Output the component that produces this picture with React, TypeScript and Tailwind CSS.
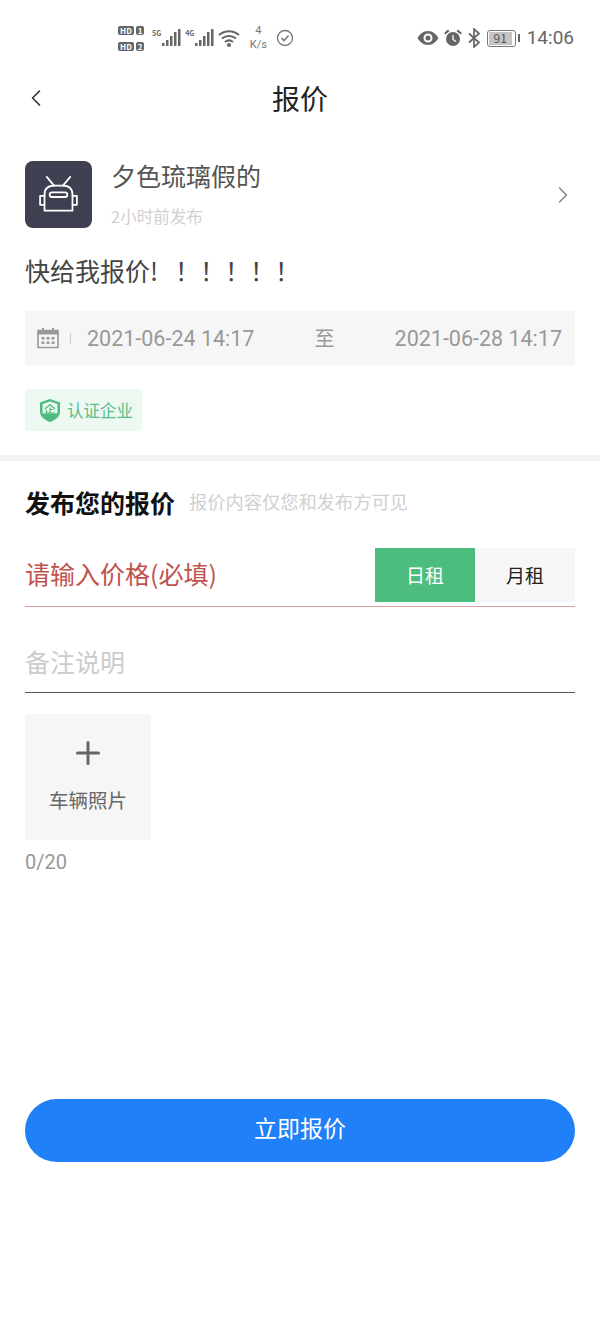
import { ChevronLeft, ChevronRight, Plus } from "lucide-react";

const Bars = () => (
  <svg width="20" height="20" viewBox="0 0 20 20" fill="#666">
    <rect x="1" y="15" width="2.500" height="3" />
    <rect x="5" y="12" width="2.500" height="6" />
    <rect x="9" y="8" width="2.500" height="10" />
    <rect x="13" y="4" width="2.500" height="14" />
    <rect x="17" y="1" width="2.500" height="17" />
  </svg>
);

const StatusBar = () => (
  <div className="h-[75px] flex items-start pt-[21px] pl-[118px] pr-[26px] justify-between">
    <div className="flex items-center h-[34px]">
      <div className="flex flex-col gap-[7px] text-[8px] leading-[9px] font-bold text-white">
        <div className="flex gap-[2px]">
          <span className="bg-[#666] rounded-[2px] px-[1px] w-[16px] text-center">HD</span>
          <span className="bg-[#666] rounded-[2px] w-[8px] text-center">1</span>
        </div>
        <div className="flex gap-[2px]">
          <span className="bg-[#666] rounded-[2px] px-[1px] w-[16px] text-center">HD</span>
          <span className="bg-[#666] rounded-[2px] w-[8px] text-center">2</span>
        </div>
      </div>
      <span className="ml-[8px] mb-[10px] text-[7px] font-bold text-[#666]">5G</span>
      <Bars />
      <span className="ml-[4px] mb-[10px] text-[7px] font-bold text-[#666]">4G</span>
      <Bars />
      <svg className="ml-[3px]" width="24" height="20" viewBox="0 0 24 20" fill="none" stroke="#666" strokeWidth="2">
        <path d="M2 7c6-5 14-5 20 0" />
        <path d="M5 10.500c4-3.500 10-3.500 14 0" />
        <path d="M8 14c2.500-2 5.500-2 8 0" />
        <circle cx="12" cy="17" r="1" fill="#666" />
      </svg>
      <div
        className="ml-[6px] w-[22px] flex flex-col items-center text-[11px] leading-[14px] text-[#777]"
        style={{ fontFamily: "Roboto, sans-serif" }}
      >
        <span>4</span>
        <span>K/s</span>
      </div>
      <svg className="ml-[7px]" width="18" height="18" viewBox="0 0 18 18" fill="none" stroke="#777" strokeWidth="1.300">
        <circle cx="9" cy="9" r="7.500" />
        <path d="M5.500 9l2.500 2.500 4.500-5" strokeWidth="1.600" />
      </svg>
    </div>
    <div className="flex items-center h-[34px]">
      <svg width="22" height="16" viewBox="0 0 22 16" fill="#666">
        <path d="M11 1C6 1 2.500 4.500 0.500 8c2 3.500 5.500 7 10.500 7s8.500-3.500 10.500-7C19.500 4.500 16 1 11 1zm0 11.500a4.500 4.500 0 1 1 0-9 4.500 4.500 0 0 1 0 9z" />
        <circle cx="11" cy="8" r="2.500" />
      </svg>
      <svg className="ml-[4px]" width="20" height="20" viewBox="0 0 20 20" fill="#666">
        <circle cx="10" cy="11" r="7" />
        <path d="M1 5l4-3.500 1.500 1.500-4 3.500zM19 5l-4-3.500-1.500 1.500 4 3.500z" />
        <path d="M10 7v4.500l3 2" stroke="#fff" strokeWidth="1.300" fill="none" />
      </svg>
      <svg className="ml-[4px]" width="14" height="20" viewBox="0 0 14 20" fill="none" stroke="#666" strokeWidth="1.700">
        <path d="M2 5.500l10 9-5 4.500V1l5 4.500-10 9" />
      </svg>
      <div className="ml-[6px] w-[29px] h-[17px] border-[1.500px] border-[#777] rounded-[3px] p-[1px] flex">
        <div className="w-[23px] bg-[#c4c4c4] text-[12px] leading-[12px] text-[#555] text-center">91</div>
      </div>
      <div className="ml-[2px] w-[2px] h-[8px] bg-[#666]" />
      <span className="ml-[7px] text-[19px] leading-[34px] text-[#666]" style={{ fontFamily: "Roboto, sans-serif" }}>14:06</span>
    </div>
  </div>
);

const Robot = () => (
  <svg width="53" height="53" viewBox="0 0 36 36" fill="none" stroke="#fff" strokeWidth="1.200" strokeLinecap="round">
    <path d="M10 6l5 6M26 6l-5 6" />
    <path d="M8.500 18c0-4.500 3-6 7-6h5c4 0 7 1.500 7 6v11h-19z" strokeLinejoin="round" />
    <path d="M8.500 19H5.500v6h3M27.500 19h3v6h-3" strokeLinejoin="round" />
    <rect x="12" y="16.500" width="12" height="3.200" rx="1.600" />
  </svg>
);

const Calendar = () => (
  <svg width="22" height="22" viewBox="0 0 22 22" fill="#999">
    <path d="M1 3.500h20v17H1z" fill="none" stroke="#999" strokeWidth="1.600" strokeLinejoin="round" />
    <rect x="1" y="3.500" width="20" height="4" />
    <rect x="5" y="1" width="2" height="4" />
    <rect x="15" y="1" width="2" height="4" />
    <rect x="4.500" y="10" width="3" height="2.500" />
    <rect x="9.500" y="10" width="3" height="2.500" />
    <rect x="14.500" y="10" width="3" height="2.500" />
    <rect x="4.500" y="14.500" width="3" height="2.500" />
    <rect x="9.500" y="14.500" width="3" height="2.500" />
    <rect x="14.500" y="14.500" width="3" height="2.500" />
  </svg>
);

const Shield = () => (
  <svg width="22" height="25" viewBox="0 0 22 25">
    <path d="M11 1l10 3.500v9c0 5-4.500 8.500-10 10.500C5.500 22 1 18.500 1 13.500v-9z" fill="#4dbb80" />
    <path d="M11 3.500l7.500 2.500v7c0 1-.2 1.800-.5 2.500H4c-.3-.7-.5-1.500-.5-2.500V6z" fill="#e9f7ef" />
    <path d="M6 11l5-4.500 5 4.500M11 9.500V15M11 11.500h3M7.500 12v3M6 15h10" stroke="#4dbb80" strokeWidth="1.200" fill="none" />
  </svg>
);

export default function App() {
  return (
    <div
      className="w-[600px] h-[1320px] bg-white overflow-hidden text-[#333]"
      style={{ fontFamily: '"Noto Sans CJK SC", "Noto Sans", sans-serif' }}
    >
      <StatusBar />
      <div className="h-[46px] flex items-center justify-between px-[22px]">
        <ChevronLeft size={28} strokeWidth={1.400} color="#333" />
        <h1 className="text-[28px] font-normal text-[#222]">报价</h1>
        <div className="w-[28px]" />
      </div>

      <div className="mt-[40px] px-[25px] flex items-start">
        <div className="w-[67px] h-[67px] rounded-[8px] bg-[#3f3f52] flex items-center justify-center">
          <Robot />
        </div>
        <div className="ml-[19px] flex-1 -mt-[3px]">
          <p className="text-[25px] leading-[34px] text-[#555]">夕色琉璃假的</p>
          <p className="mt-[14px] text-[16.500px] leading-[20px] text-[#d0d0d0]">2小时前发布</p>
        </div>
        <ChevronRight size={28} strokeWidth={1.400} color="#888" className="mr-[-2px] self-center" />
      </div>

      <p className="mt-[24px] px-[25px] text-[25px] leading-[36px] text-[#444]">
        快给我报价!<span className="ml-[17px]">！！！！！</span>
      </p>

      <div className="mx-[25px] mt-[23px] h-[54px] bg-[#f6f6f7] flex items-center pl-[12px] pr-[13px] text-[20px] text-[#999]">
        <Calendar />
        <div className="ml-[11px] w-[1px] h-[11px] bg-[#ccc]" />
        <span className="ml-[16px] pt-[3px] text-[21.500px]" style={{ fontFamily: "Roboto, sans-serif" }}>2021-06-24 14:17</span>
        <span className="ml-[60px] text-[#999]">至</span>
        <span className="ml-auto pt-[3px] text-[21.500px]" style={{ fontFamily: "Roboto, sans-serif" }}>2021-06-28 14:17</span>
      </div>

      <div className="ml-[25px] mt-[24px] w-[117px] h-[42px] bg-[#edf8f1] rounded-[4px] flex items-center pl-[14px] gap-[6px] text-[16.500px] text-[#5bbd88]">
        <Shield />
        <span>认证企业</span>
      </div>

      <div className="mt-[24px] h-[6px] bg-[#f2f2f2]" />

      <div className="mt-[24px] px-[25px] flex items-center">
        <h2 className="text-[25px] leading-[34px] font-bold text-[#111]">发布您的报价</h2>
        <span className="ml-[14px] text-[18.250px] text-[#d0d0d0]">报价内容仅您和发布方可见</span>
      </div>

      <div className="mx-[25px] mt-[29px] h-[59px] pb-[1px] border-b border-[#d8a0a0] flex items-start justify-between">
        <span className="text-[25px] leading-[50px] text-[#c0524e]">请输入价格(必填)</span>
        <div className="flex h-[54px] text-[19px]">
          <div className="w-[100px] flex items-center justify-center bg-[#4cbd7f] text-white">日租</div>
          <div className="w-[100px] flex items-center justify-center bg-[#f7f7f7] text-[#222]">月租</div>
        </div>
      </div>

      <div className="mx-[25px] h-[86px] border-b border-[#555] flex items-center pt-[24px]">
        <span className="text-[25px] text-[#ccc]">备注说明</span>
      </div>

      <div className="ml-[25px] mt-[21px] w-[126px] h-[126px] bg-[#f6f6f6] flex flex-col items-center">
        <Plus size={36} strokeWidth={2} color="#666" className="mt-[21px]" />
        <span className="mt-[16px] text-[19.500px] leading-[26px] text-[#666]">车辆照片</span>
      </div>

      <p className="mt-[10px] px-[25px] text-[20px] leading-[24px] text-[#999]" style={{ fontFamily: "Roboto, sans-serif" }}>0/20</p>

      <button className="block mx-[25px] mt-[225px] w-[550px] h-[63px] pb-[6px] rounded-full bg-[#2080f8] text-white text-[23px]">
        立即报价
      </button>
    </div>
  );
}
